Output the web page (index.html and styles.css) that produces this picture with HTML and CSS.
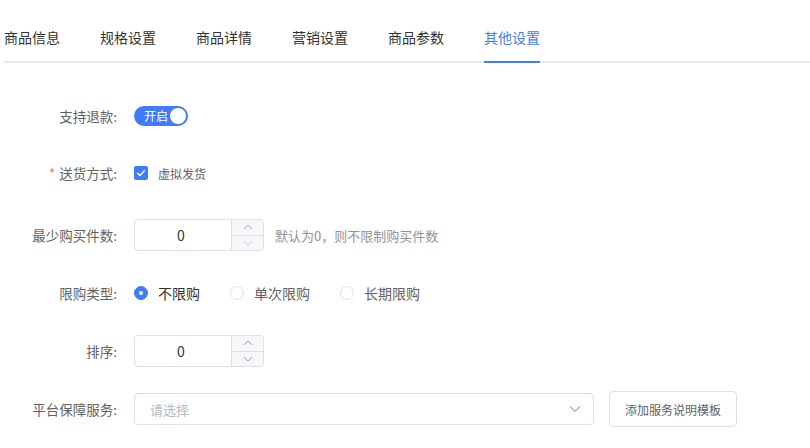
FILE: index.html
```html
<!DOCTYPE html>
<html lang="zh-CN">
<head>
<meta charset="utf-8">
<title>其他设置</title>
<link rel="stylesheet" href="styles.css">
</head>
<body>
<div class="tabs">
  <div class="tab">商品信息</div>
  <div class="tab">规格设置</div>
  <div class="tab">商品详情</div>
  <div class="tab">营销设置</div>
  <div class="tab">商品参数</div>
  <div class="tab active">其他设置</div>
</div>

<div class="form">
  <div class="form-item item-refund">
    <div class="label">支持退款:</div>
    <div class="content">
      <div class="switch"><span class="switch-text">开启</span><span class="switch-dot"></span></div>
    </div>
  </div>

  <div class="form-item item-delivery">
    <div class="label"><span class="required">*</span>送货方式:</div>
    <div class="content">
      <label class="checkbox">
        <span class="checkbox-box">
          <svg width="14" height="14" viewBox="0 0 14 14"><path d="M3.6 7.2 L6 9.5 L10.4 4.6" fill="none" stroke="#fff" stroke-width="1.4" stroke-linecap="round" stroke-linejoin="round"/></svg>
        </span>
        <span class="checkbox-label">虚拟发货</span>
      </label>
    </div>
  </div>

  <div class="form-item">
    <div class="label">最少购买件数:</div>
    <div class="content">
      <div class="input-number">
        <div class="input-number-value">0</div>
        <div class="input-number-controls">
          <div class="ctrl ctrl-up"><svg width="10" height="6" viewBox="0 0 10 6"><path d="M1 5 L5 1 L9 5" fill="none" stroke="#909399" stroke-width="0.9"/></svg></div>
          <div class="ctrl"><svg width="10" height="6" viewBox="0 0 10 6"><path d="M1 1 L5 5 L9 1" fill="none" stroke="#c0c4cc" stroke-width="0.9"/></svg></div>
        </div>
      </div>
      <span class="hint">默认为0，则不限制购买件数</span>
    </div>
  </div>

  <div class="form-item">
    <div class="label">限购类型:</div>
    <div class="content">
      <div class="radio checked"><span class="radio-circle"></span><span class="radio-label">不限购</span></div>
      <div class="radio"><span class="radio-circle"></span><span class="radio-label">单次限购</span></div>
      <div class="radio"><span class="radio-circle"></span><span class="radio-label">长期限购</span></div>
    </div>
  </div>

  <div class="form-item">
    <div class="label">排序:</div>
    <div class="content">
      <div class="input-number">
        <div class="input-number-value">0</div>
        <div class="input-number-controls">
          <div class="ctrl ctrl-up"><svg width="10" height="6" viewBox="0 0 10 6"><path d="M1 5 L5 1 L9 5" fill="none" stroke="#909399" stroke-width="0.9"/></svg></div>
          <div class="ctrl"><svg width="10" height="6" viewBox="0 0 10 6"><path d="M1 1 L5 5 L9 1" fill="none" stroke="#909399" stroke-width="0.9"/></svg></div>
        </div>
      </div>
    </div>
  </div>

  <div class="form-item">
    <div class="label">平台保障服务:</div>
    <div class="content">
      <div class="select">
        <span class="placeholder">请选择</span>
        <svg width="12" height="8" viewBox="0 0 12 8"><path d="M1 1.5 L6 6.5 L11 1.5" fill="none" stroke="#a8abb2" stroke-width="1.1"/></svg>
      </div>
      <button class="btn">添加服务说明模板</button>
    </div>
  </div>
</div>
</body>
</html>
```

FILE: styles.css
```css
* { box-sizing: border-box; }

body {
  margin: 0;
  background: #fff;
  font-family: "Noto Sans CJK SC", "Noto Sans", sans-serif;
  color: #606266;
}

.tabs {
  display: flex;
  gap: 40px;
  margin-left: 4px;
  padding-top: 16px;
  border-bottom: 2px solid #e4e7ed;
}

.tab {
  position: relative;
  height: 45px;
  line-height: 42px;
  font-size: 14px;
  color: #303133;
  white-space: nowrap;
}

.tab.active { color: #3f7cf7; }

.tab.active::after {
  content: "";
  position: absolute;
  left: 0;
  right: 0;
  bottom: -2px;
  height: 2px;
  background: #3f7cf7;
}

.form { margin-top: 37px; }

.form-item {
  display: flex;
  align-items: center;
  height: 32px;
  margin-bottom: 26px;
}

.item-refund { margin-bottom: 25px; }
.item-delivery { margin-bottom: 30px; }

.label {
  width: 117px;
  margin-right: 17px;
  text-align: right;
  font-size: 13.5px;
  color: #606266;
  white-space: nowrap;
}

.required {
  color: #f56c6c;
  margin-right: 4px;
}

.content {
  display: flex;
  align-items: center;
}

/* switch */
.switch {
  display: flex;
  align-items: center;
  width: 54px;
  height: 20px;
  border-radius: 10px;
  background: #3f7cf7;
  padding: 0 2px 0 10px;
}

.switch-text {
  font-size: 12px;
  color: #fff;
  line-height: 20px;
}

.switch-dot {
  width: 16px;
  height: 16px;
  border-radius: 50%;
  background: #fff;
  margin-left: auto;
}

/* checkbox */
.checkbox {
  display: flex;
  align-items: center;
}

.checkbox-box {
  width: 14px;
  height: 14px;
  border-radius: 2px;
  background: #3f7cf7;
  display: flex;
}

.checkbox-label {
  margin-left: 10px;
  font-size: 12px;
  color: #606266;
}

/* input number */
.input-number {
  display: flex;
  width: 130px;
  height: 32px;
  border: 1px solid #dcdfe6;
  border-radius: 4px;
  overflow: hidden;
}

.input-number-value {
  flex: 1;
  padding-left: 14px;
  padding-right: 18px;
  text-align: center;
  line-height: 30px;
  font-size: 14px;
  color: #303133;
}

.input-number-controls {
  width: 32px;
  display: flex;
  flex-direction: column;
  border-left: 1px solid #dcdfe6;
  background: #f5f7fa;
}

.ctrl {
  flex: 1;
  display: flex;
  align-items: center;
  justify-content: center;
}

.ctrl-up { border-bottom: 1px solid #dcdfe6; }

.hint {
  margin-left: 11px;
  font-size: 13px;
  color: #909399;
}

/* radio */
.radio {
  display: flex;
  align-items: center;
  margin-right: 30px;
}

.radio-circle {
  width: 14px;
  height: 14px;
  border-radius: 50%;
  border: 1px solid #dcdfe6;
  background: #fff;
  display: flex;
  align-items: center;
  justify-content: center;
}

.radio.checked .radio-circle {
  background: #3f7cf7;
  border-color: #3f7cf7;
}

.radio.checked .radio-circle::after {
  content: "";
  width: 4px;
  height: 4px;
  border-radius: 50%;
  background: #fff;
}

.radio-label {
  margin-left: 10px;
  font-size: 14px;
  color: #606266;
}

.radio.checked .radio-label { color: #303133; }

/* select */
.select {
  width: 460px;
  height: 32px;
  border: 1px solid #dcdfe6;
  border-radius: 4px;
  display: flex;
  align-items: center;
  justify-content: space-between;
  padding: 0 12px 0 15px;
}

.placeholder {
  font-size: 13px;
  color: #b4b7bd;
}

.btn {
  margin-left: 15px;
  height: 36px;
  padding: 0 15px;
  border: 1px solid #dcdfe6;
  border-radius: 4px;
  background: #fff;
  font-family: "Noto Sans CJK SC", "Noto Sans", sans-serif;
  font-size: 12px;
  color: #606266;
}
```
